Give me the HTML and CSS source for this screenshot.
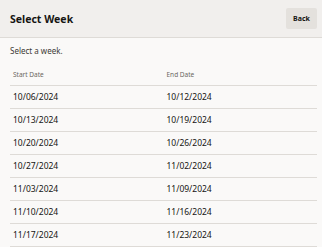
FILE: index.html
```html
<!DOCTYPE html>
<html>
<head>
<meta charset="utf-8">
<link rel="stylesheet" href="styles.css">
</head>
<body>
<div class="header">
  <h1 class="title">Select Week</h1>
  <button class="back">Back</button>
</div>
<div class="content">
  <p class="hint">Select a week.</p>
  <div class="weeks">
    <div class="row head"><div>Start Date</div><div>End Date</div></div>
    <div class="row"><div>10/06/2024</div><div>10/12/2024</div></div>
    <div class="row"><div>10/13/2024</div><div>10/19/2024</div></div>
    <div class="row"><div>10/20/2024</div><div>10/26/2024</div></div>
    <div class="row"><div>10/27/2024</div><div>11/02/2024</div></div>
    <div class="row"><div>11/03/2024</div><div>11/09/2024</div></div>
    <div class="row"><div>11/10/2024</div><div>11/16/2024</div></div>
    <div class="row"><div>11/17/2024</div><div>11/23/2024</div></div>
  </div>
</div>
</body>
</html>
```
FILE: styles.css
```css
html, body {
  margin: 0;
  padding: 0;
  background: #faf9f8;
  font-family: "Noto Sans", "Open Sans", sans-serif;
  color: #161513;
}
.header {
  height: 37px;
  border-bottom: 1px solid #dedbd7;
  background: #f1efed;
  display: flex;
  align-items: center;
  justify-content: space-between;
  padding: 0 5px 0 10px;
}
.title {
  margin: 0;
  font-size: 10.5px;
  font-weight: 700;
}
.back {
  width: 31px;
  height: 21px;
  border: none;
  border-radius: 2px;
  background: #e4e1dd;
  font-family: inherit;
  font-size: 7px;
  font-weight: 700;
  color: #161513;
  padding: 0;
}
.content {
  padding: 0 5px 0 10px;
}
.hint {
  margin: 0;
  padding-top: 7px;
  height: 12px;
  font-size: 8px;
  line-height: 11px;
  color: #3d3a36;
}
.weeks {
  display: flex;
  flex-direction: column;
}
.row {
  display: grid;
  grid-template-columns: 1fr 1fr;
  height: 22px;
  align-items: center;
  border-bottom: 1px solid #dedbd7;
  font-size: 8.5px;
  line-height: 12px;
}
.row > div {
  padding: 0 3px;
}
.row.head {
  height: 15px;
  padding-top: 13px;
  align-items: start;
  font-size: 6.5px;
  line-height: 9px;
  color: #6b6762;
}
```
